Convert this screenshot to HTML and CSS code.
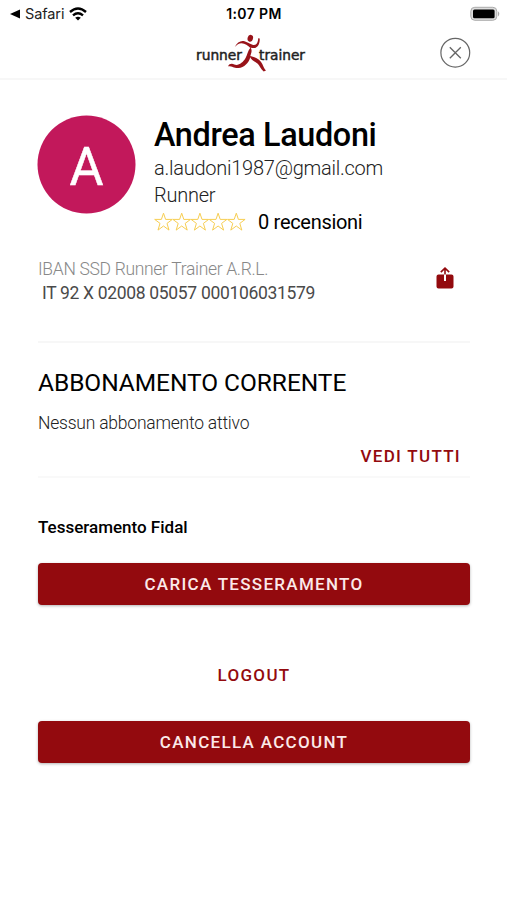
FILE: index.html
```html
<!DOCTYPE html>
<html lang="it">

<head>
    <meta charset="utf-8">
    <title>Runner Trainer</title>
    <link rel="stylesheet" href="styles.css">
</head>

<body>
    <header class="header">
        <div class="status-bar">
            <div class="status-left">
                <svg width="10" height="10" viewBox="0 0 10 10"><path d="M0 5 10 .5v9z"/></svg>
                <span class="safari">Safari</span>
                <svg class="wifi" width="18" height="14" viewBox="0 0 18 14">
                    <path d="M1 5q8-7 16 0M4 8.3q5-4.2 10 0" fill="none" stroke="#000" stroke-width="2.4"/>
                    <path d="M6.2 10.7q2.8-2.1 5.6 0L9 13.6z"/>
                </svg>
            </div>
            <span class="clock">1:07 PM</span>
            <svg class="battery" width="31" height="16" viewBox="0 0 31 16">
                <rect x=".8" y="1.3" width="26" height="13" rx="4" fill="#ddd" stroke="#aaa"/>
                <rect x="3" y="3.5" width="21.6" height="8.8" rx="1.5"/>
                <path d="M28 5.2q2.6 2.6 0 5.2z" fill="#aaa"/>
            </svg>
        </div>

        <div class="toolbar">
            <svg class="logo" width="120" height="38" viewBox="192 34 120 38">
                <text x="196" y="59.5" textLength="46" lengthAdjust="spacingAndGlyphs">runner</text>
                <text x="259" y="59.5" textLength="46" lengthAdjust="spacingAndGlyphs">trainer</text>
                <g fill="#981319">
                    <ellipse cx="250.3" cy="38.3" rx="2.7" ry="3.5" transform="rotate(15 250.3 38.3)"/>
                    <path d="M234.8 47C237 42 241 40.1 244.5 41.2C247 42 249 43.5 252.5 44.8C256 46 258 43 258.2 38.2L259.7 38.6C260 44 257.5 48.4 253.3 48.1C252 48 251 47.4 250.4 48C248 46 245 43.3 241.5 43.3C238.8 43.3 237 45 234.8 47z"/>
                    <path d="M250.5 47.5C253 51 250.5 54 250.3 57C249 63 244 67.5 238.5 68C234 68.4 233 66.2 228 66.3C229 63.8 232 63.2 234.3 64.5C238.5 66.3 243 62.2 245.3 58.5C247.5 55 247.5 51 250.5 47.5z"/>
                    <path d="M249.5 56C255 56.5 260.3 59.7 262.3 64C263.6 67 264.3 69 266 70.5L263.7 71.6C260.2 68.6 259.7 65.2 256.7 63.1C253.7 61 251 60 249.5 56z"/>
                </g>
            </svg>
            <svg class="close" width="32" height="32" viewBox="0 0 32 32" fill="none" stroke="#666">
                <circle cx="16.3" cy="15.7" r="14.4" stroke-width="1.2"/>
                <path d="M10.8 10.2l11 11m0-11l-11 11" stroke-width="1.3"/>
            </svg>
        </div>
    </header>

    <main class="content">
        <section class="profile">
            <svg class="avatar" width="98" height="98" viewBox="0 0 98 98">
                <circle cx="48.5" cy="48.5" r="49" fill="#c2185b"/>
                <text x="48.5" y="68.5" text-anchor="middle" textLength="34" lengthAdjust="spacingAndGlyphs">A</text>
            </svg>
            <div class="info">
                <h1 class="name">Andrea Laudoni</h1>
                <div class="detail email">a.laudoni1987@gmail.com</div>
                <div class="detail">Runner</div>
                <div class="rating">
                    <svg width="92" height="20" viewBox="0 0 92 20" fill="none" stroke="#f7ce52" stroke-width="1">
                        <defs><path id="star" d="M9.5 1.2l2.1 6.2h6.7l-5.3 4 2 6.7-5.5-4.1-5.5 4.1 2-6.7-5.3-4h6.7z"/></defs>
                        <use href="#star"/>
                        <use href="#star" x="18.2"/>
                        <use href="#star" x="36.4"/>
                        <use href="#star" x="54.6"/>
                        <use href="#star" x="72.8"/>
                    </svg>
                    <span class="reviews">0 recensioni</span>
                </div>
            </div>
        </section>

        <section class="iban">
            <div>
                <div class="iban-label">IBAN SSD Runner Trainer A.R.L.</div>
                <div class="iban-code">IT 92 X 02008 05057 000106031579</div>
            </div>
            <svg class="share" width="18" height="22" viewBox="0 0 18 22">
                <path fill="#930a0e" d="M2.5 7.5H8V14h2V7.5h5.5q2 0 2 2v10q0 2-2 2h-13q-2 0-2-2v-10q0-2 2-2z"/>
                <path d="M9 7.5V1.3M4.8 5.2L9 1.2l4.2 4" fill="none" stroke="#930a0e" stroke-width="1.6"/>
            </svg>
        </section>

        <section class="subscription">
            <h2 class="title">ABBONAMENTO CORRENTE</h2>
            <p class="empty">Nessun abbonamento attivo</p>
            <button class="link-btn all-btn">VEDI TUTTI</button>
        </section>

        <h3 class="subtitle">Tesseramento Fidal</h3>
        <button class="btn">CARICA TESSERAMENTO</button>
        <button class="link-btn logout-btn">LOGOUT</button>
        <button class="btn">CANCELLA ACCOUNT</button>
    </main>
</body>

</html>
```
FILE: styles.css
```css
* {
    box-sizing: border-box;
}

body {
    margin: 0;
    min-height: 900px;
    background-color: #fff;
    font-family: Roboto, sans-serif;
    color: #000;
}

h1, h2, h3, p {
    margin: 0;
}

svg {
    display: block;
    flex-shrink: 0;
}

/* Header */
.header {
    height: 80px;
    border-bottom: 2px solid #f7f7f7;
}

.status-bar {
    display: grid;
    grid-template-columns: 1fr auto 1fr;
    align-items: center;
    height: 27px;
    padding: 0 6px 0 10px;
    font-family: Inter, sans-serif;
}

.status-left {
    display: flex;
    align-items: center;
    gap: 5px;
}

.safari {
    font-size: 14.5px;
    letter-spacing: -0.1px;
    color: #222;
}

.clock {
    margin-right: 3px;
    font-size: 14px;
    font-weight: 600;
    letter-spacing: 0.4px;
}

.battery {
    justify-self: end;
}

.toolbar {
    display: grid;
    grid-template-columns: 1fr auto 1fr;
    align-items: center;
    height: 51px;
    padding: 0 36px 0 33px;
}

.logo {
    grid-column: 2;
}

.logo text {
    font-family: "DejaVu Sans", sans-serif;
    font-size: 14.5px;
    fill: #222;
    stroke: #222;
    stroke-width: 0.5px;
}

.close {
    justify-self: end;
}

/* Content */
.content {
    padding: 36px 37px 0 38px;
}

.profile {
    display: flex;
    gap: 18px;
    height: 122px;
}

.avatar {
    overflow: visible;
}

.avatar text {
    font-size: 53px;
    fill: #fff;
    stroke: #fff;
    stroke-width: 0.5px;
}

.name {
    font-size: 32.4px;
    font-weight: 500;
    letter-spacing: -0.35px;
    line-height: 39px;
    white-space: nowrap;
}

.detail {
    font-size: 20px;
    font-weight: 300;
    letter-spacing: -0.25px;
    line-height: 27px;
    color: #222;
}

.rating {
    display: flex;
    align-items: center;
    gap: 12px;
    height: 26px;
}

.reviews {
    font-size: 20px;
    letter-spacing: -0.3px;
}

.iban {
    display: flex;
    justify-content: space-between;
    height: 105px;
    padding: 19px 16px 0 0;
    border-bottom: 2px solid #f7f7f7;
}

.iban-label {
    font-size: 17.5px;
    font-weight: 300;
    letter-spacing: -0.32px;
    line-height: 24px;
    color: #888;
}

.iban-code {
    padding-left: 4px;
    font-size: 17.5px;
    letter-spacing: -0.32px;
    line-height: 24px;
    color: #4a4a4a;
}

.share {
    margin-top: 10px;
}

.subscription {
    display: flex;
    flex-direction: column;
    height: 135px;
    padding-top: 24px;
    border-bottom: 2px solid #f9f9f9;
}

.title {
    font-size: 24.5px;
    font-weight: 400;
    letter-spacing: -0.05px;
    line-height: 32px;
}

.empty {
    margin-top: 12px;
    font-size: 17.5px;
    font-weight: 300;
    letter-spacing: -0.22px;
    line-height: 24px;
    color: #222;
}

.subtitle {
    margin: 37px 0 24px;
    font-size: 17px;
    font-weight: 500;
    line-height: 24px;
}

/* Buttons */
.btn, .link-btn {
    display: block;
    border: none;
    padding: 0;
    font-family: inherit;
    font-size: 17px;
    font-weight: 500;
    letter-spacing: 1.3px;
    line-height: 24px;
}

.btn {
    width: 100%;
    height: 42px;
    border-radius: 4px;
    background-color: #930a0e;
    color: #fbe9e9;
    box-shadow: 0 1px 3px rgba(0, 0, 0, 0.3);
}

.link-btn {
    background: none;
    color: #930a0e;
}

.all-btn {
    align-self: flex-end;
    margin: 9px 9px 0 0;
}

.logout-btn {
    margin: 58px auto 34px;
}
```
